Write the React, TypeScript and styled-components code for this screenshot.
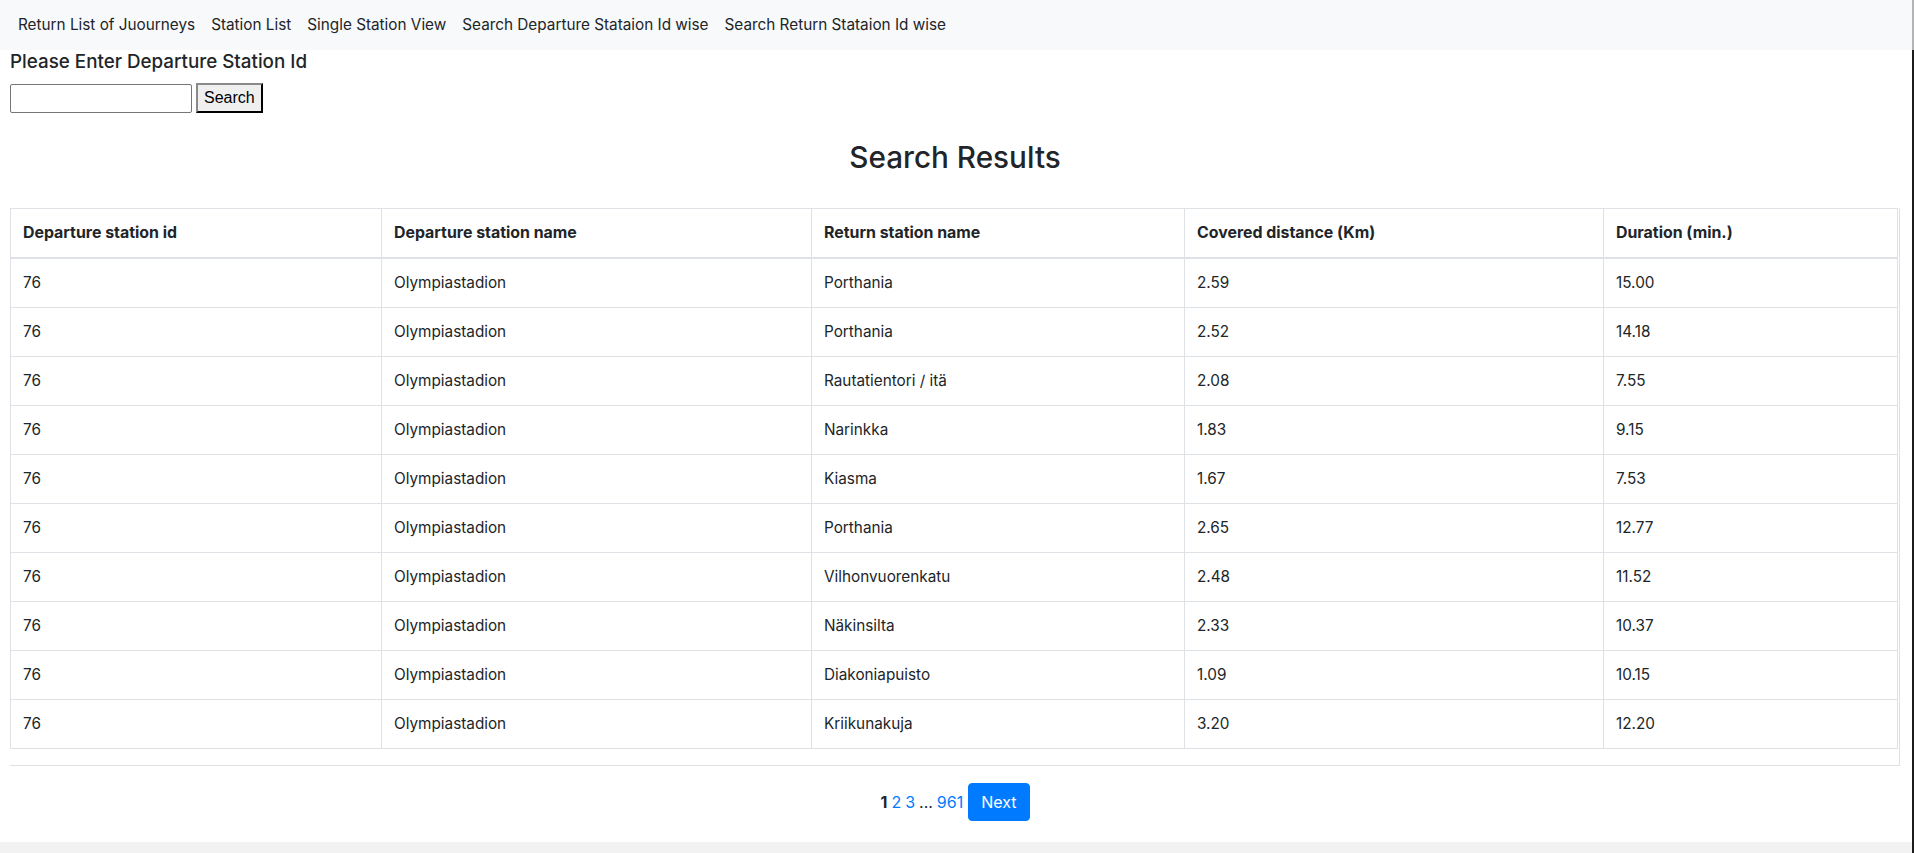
import React from "react";
import styled, { createGlobalStyle } from "styled-components";

const GlobalStyle = createGlobalStyle`
  html, body {
    margin: 0;
    padding: 0;
    background: #ffffff;
  }
  *, *::before, *::after { box-sizing: border-box; }
  body {
    font-family: Inter, "Noto Sans", Roboto, sans-serif;
    font-size: 16px;
    line-height: 1.5;
    color: #212529;
  }
`;

const Root = styled.div`
  min-height: 100vh;
  display: flex;
  flex-direction: column;
`;

const NavBar = styled.nav`
  height: 50px;
  background: #f8f9fa;
  display: flex;
  align-items: center;
  padding: 0 0 0 10px;
  border-right: 2px solid #b4b4b4;
`;

const NavLink = styled.a`
  padding: 0 8px;
  color: #212529;
  text-decoration: none;
  font-size: 15.3px;
  line-height: 24px;
  cursor: pointer;
`;

const Main = styled.main`
  background: #ffffff;
  padding: 0 12px 21px 10px;
  border-right: 2px solid #1c1c1c;
`;

const PromptTitle = styled.h5`
  margin: 0 0 9px 0;
  font-size: 18.8px;
  font-weight: 500;
  line-height: 24px;
`;

const SearchForm = styled.form`
  display: flex;
  align-items: center;
  gap: 4px;
`;

const TextInput = styled.input`
  width: 182px;
  height: 29px;
  border: 1px solid #767676;
  border-radius: 2px;
  padding: 1px 2px;
  font-size: 16px;
  font-family: "Liberation Sans", Arial, sans-serif;
  background: #fff;
`;

const PlainButton = styled.button`
  height: 30px;
  padding: 0 6px;
  font-size: 16px;
  font-family: "Liberation Sans", Arial, sans-serif;
  color: #000;
  background: #efefef;
  border: 2px outset #4a4a4a;
  border-top-color: #8a8a8a;
  border-left-color: #8a8a8a;
  border-radius: 0;
`;

const ResultsTitle = styled.h2`
  margin: 25px 0 32px 0;
  text-align: center;
  font-size: 29.7px;
  font-weight: 500;
  line-height: 38px;
`;

const TableFrame = styled.div`
  border-right: 1px solid #dee2e6;
  border-bottom: 1px solid #dee2e6;
  padding: 0 1px 16px 0;
`;

const Table = styled.table`
  width: 100%;
  table-layout: fixed;
  border-collapse: collapse;
  color: #212529;
  font-size: 15.3px;
`;

const HeadCell = styled.th`
  text-align: left;
  font-weight: 700;
  font-size: 15.9px;
  padding: 12px 12px;
  line-height: 24px;
  border: 1px solid #dee2e6;
  border-bottom-width: 2px;
`;

const Cell = styled.td`
  padding: 12px 12px;
  line-height: 24px;
  border: 1px solid #dee2e6;
`;

const Pager = styled.div`
  margin-top: 17px;
  display: flex;
  justify-content: center;
  align-items: center;
  gap: 5px;
`;

const PageNumbers = styled.div`
  display: flex;
  align-items: center;
  gap: 4px;
  font-size: 16px;
`;

const CurrentPage = styled.span`
  font-weight: 700;
  color: #212529;
`;

const PageLink = styled.a`
  color: #007bff;
  text-decoration: none;
  cursor: pointer;
`;

const Ellipsis = styled.span`
  color: #212529;
`;

const PrimaryButton = styled.button`
  height: 38px;
  padding: 0 12px;
  font-size: 16px;
  font-family: inherit;
  color: #fff;
  background: #007bff;
  border: 1px solid #007bff;
  border-radius: 4px;
  line-height: 24px;
`;

const FooterBand = styled.div`
  flex: 1;
  background: #f2f2f2;
  border-right: 2px solid #1c1c1c;
`;

const columns = [
  { title: "Departure station id", width: 371 },
  { title: "Departure station name", width: 430 },
  { title: "Return station name", width: 373 },
  { title: "Covered distance (Km)", width: 419 },
  { title: "Duration (min.)", width: undefined as number | undefined },
];

const rows = [
  ["Porthania", "2.59", "15.00"],
  ["Porthania", "2.52", "14.18"],
  ["Rautatientori / itä", "2.08", "7.55"],
  ["Narinkka", "1.83", "9.15"],
  ["Kiasma", "1.67", "7.53"],
  ["Porthania", "2.65", "12.77"],
  ["Vilhonvuorenkatu", "2.48", "11.52"],
  ["Näkinsilta", "2.33", "10.37"],
  ["Diakoniapuisto", "1.09", "10.15"],
  ["Kriikunakuja", "3.20", "12.20"],
];

const navItems = [
  "Return List of Juourneys",
  "Station List",
  "Single Station View",
  "Search Departure Stataion Id wise",
  "Search Return Stataion Id wise",
];

export default function App() {
  return (
    <>
      <GlobalStyle />
      <Root>
        <NavBar>
          {navItems.map((n) => (
            <NavLink key={n}>{n}</NavLink>
          ))}
        </NavBar>
        <Main>
          <PromptTitle>Please Enter Departure Station Id</PromptTitle>
          <SearchForm onSubmit={(e) => e.preventDefault()}>
            <TextInput type="text" />
            <PlainButton type="submit">Search</PlainButton>
          </SearchForm>
          <ResultsTitle>Search Results</ResultsTitle>
          <TableFrame>
            <Table>
              <colgroup>
                {columns.map((c) => (
                  <col key={c.title} style={c.width ? { width: c.width } : undefined} />
                ))}
              </colgroup>
              <thead>
                <tr>
                  {columns.map((c) => (
                    <HeadCell key={c.title}>{c.title}</HeadCell>
                  ))}
                </tr>
              </thead>
              <tbody>
                {rows.map((r, i) => (
                  <tr key={i}>
                    <Cell>76</Cell>
                    <Cell>Olympiastadion</Cell>
                    <Cell>{r[0]}</Cell>
                    <Cell>{r[1]}</Cell>
                    <Cell>{r[2]}</Cell>
                  </tr>
                ))}
              </tbody>
            </Table>
          </TableFrame>
          <Pager>
            <PageNumbers>
              <CurrentPage>1</CurrentPage>
              <PageLink>2</PageLink>
              <PageLink>3</PageLink>
              <Ellipsis>...</Ellipsis>
              <PageLink>961</PageLink>
            </PageNumbers>
            <PrimaryButton>Next</PrimaryButton>
          </Pager>
        </Main>
        <FooterBand />
      </Root>
    </>
  );
}
